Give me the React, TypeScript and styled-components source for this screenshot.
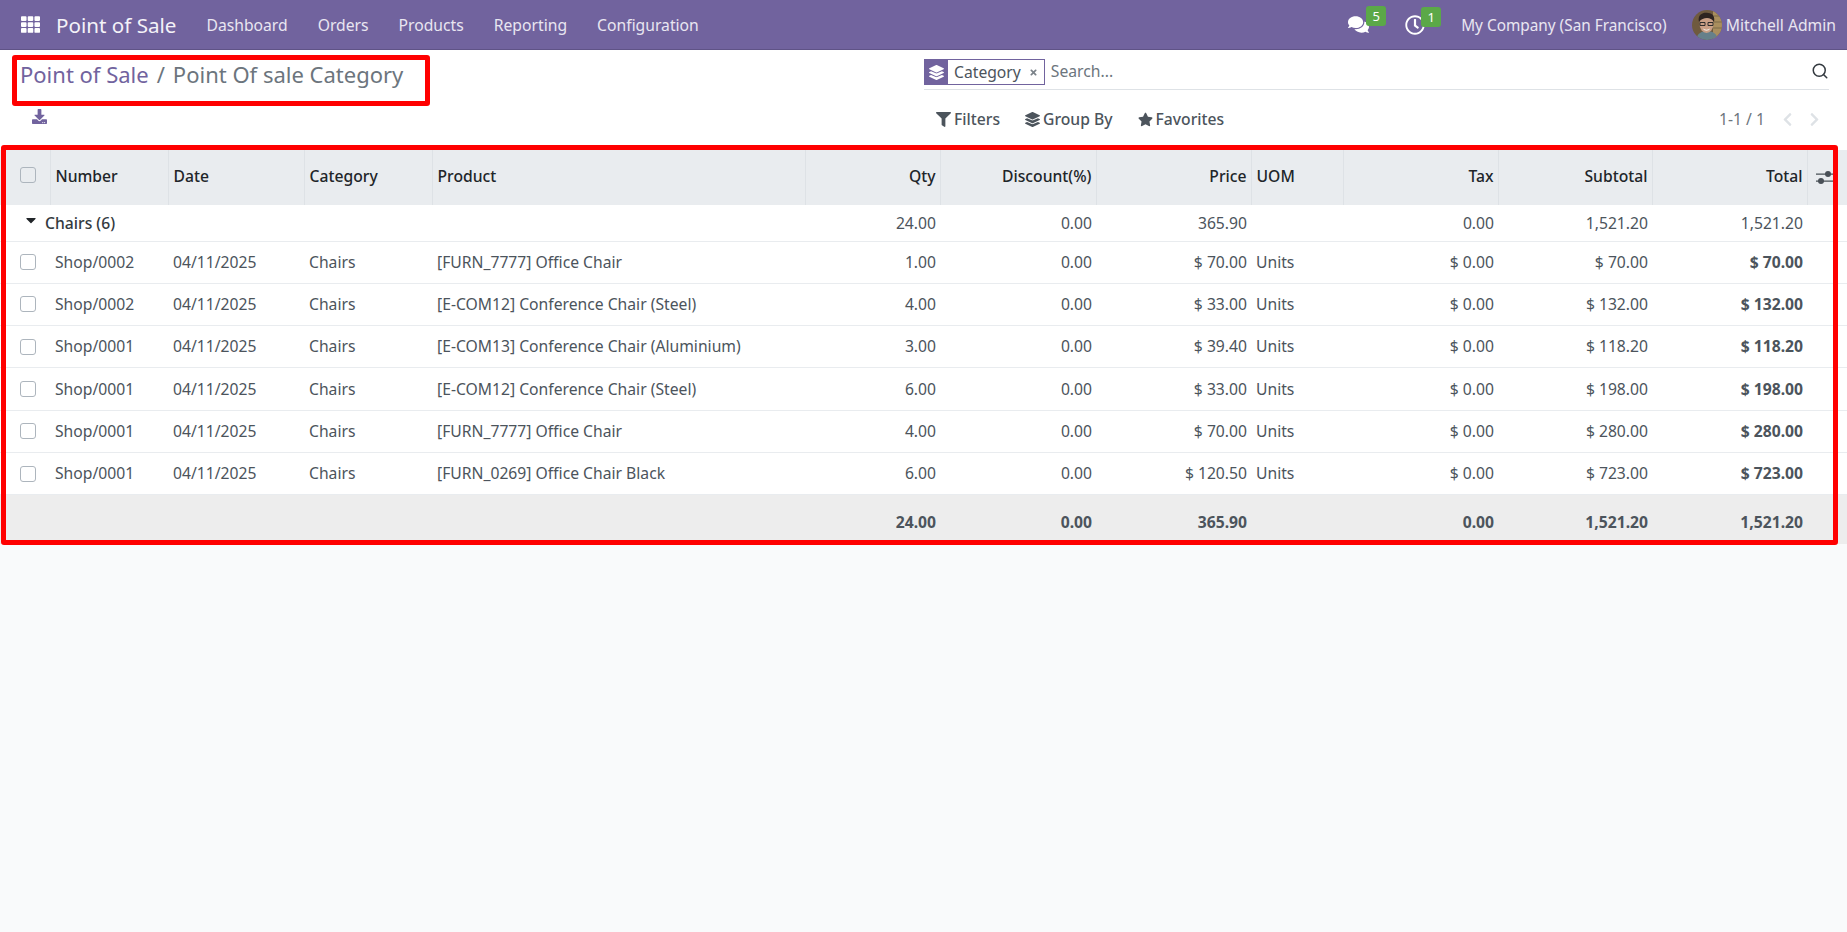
import { FC, ReactNode } from 'react'

import { Search } from 'lucide-react'
import { FaCaretDown, FaChevronLeft, FaChevronRight, FaComments, FaDownload, FaFilter, FaLayerGroup, FaRegClock, FaStar, FaTh, FaTimes } from 'react-icons/fa'
import styled, { createGlobalStyle } from 'styled-components'

const FONT = '"Noto Sans", "Open Sans", sans-serif'

const GlobalStyle = createGlobalStyle`
  html, body {
    margin: 0;
    height: 100%;
    background: #f9fafb;
    font-family: ${FONT};
    font-size: 15.7px;
    color: #4c545c;
  }
`

const Page = styled.div`
  display: flex;
  flex-direction: column;
  width: 1847px;
  height: 932px;
  overflow: hidden;
`

const NavBar = styled.header`
  display: flex;
  align-items: center;
  flex: 0 0 50px;
  box-sizing: border-box;
  padding: 0 11px 0 21px;
  background: #71639e;
  border-bottom: 1px solid #5f5386;
  color: #fff;
`

const Brand = styled.span`
  margin: 0 15px 0 16px;
  font-size: 20.6px;
  color: #f4f2f8;
`

const NavItem = styled.span`
  padding: 0 15px;
  color: #e9e6f1;
`

const NavRight = styled.div`
  display: flex;
  align-items: center;
  margin-left: auto;
`

const IconBadge = styled.span`
  position: relative;
  display: flex;
  align-items: center;
  margin-right: 36px;
  font-size: 20px;
`

const Badge = styled.span<{ $offset: number }>`
  position: absolute;
  top: -8px;
  right: ${({ $offset }) => $offset}px;
  display: flex;
  align-items: center;
  justify-content: center;
  width: 20px;
  height: 20px;
  border-radius: 3px;
  background: #5ba848;
  font-size: 13px;
`

const Company = styled.span`
  margin-right: 25px;
  font-size: 15.35px;
  color: #e9e6f1;
`

const UserName = styled.span`
  margin-left: 4px;
  color: #e9e6f1;
`

const ControlPanel = styled.section`
  display: grid;
  grid-template-columns: 924px 1fr;
  flex: 0 0 100px;
  background: #fff;
`

const LeftPanel = styled.div`
  display: flex;
  flex-direction: column;
  align-items: flex-start;
  padding-left: 20px;
`

const Annotated = styled.div`
  position: relative;
`

const RedFrame = styled.div<{ $inset: string }>`
  position: absolute;
  inset: ${({ $inset }) => $inset};
  border: 5px solid #ff0000;
  border-radius: 3px;
  pointer-events: none;
`

const Breadcrumb = styled.div`
  display: flex;
  gap: 8px;
  height: 50px;
  padding-bottom: 2px;
  box-sizing: border-box;
  align-items: center;
  font-size: 22px;
  color: #6c757d;
`

const BreadcrumbLink = styled.span`
  color: #71639e;
`

const DownloadButton = styled.span`
  display: flex;
  margin: 9px 0 0 12px;
  font-size: 15px;
  color: #71639e;
`

const RightPanel = styled.div`
  display: flex;
  flex-direction: column;
  padding-right: 18px;
`

const SearchBar = styled.div`
  display: flex;
  align-items: center;
  margin-top: 9px;
  height: 30px;
  border-bottom: 1px solid #dee2e6;
`

const Facet = styled.span`
  display: flex;
  align-items: stretch;
  box-sizing: border-box;
  height: 26px;
  margin-bottom: 4px;
  border: 1px solid #71639e;
`

const FacetIcon = styled.span`
  display: flex;
  align-items: center;
  justify-content: center;
  width: 23px;
  background: #71639e;
  color: #fff;
  font-size: 15px;
`

const FacetLabel = styled.span`
  display: flex;
  align-items: center;
  gap: 8px;
  padding: 0 6px 0 6px;
  color: #4c545c;
`

const FacetClose = styled.span`
  display: flex;
  font-size: 9px;
  color: #7b8289;
`

const SearchText = styled.span`
  flex: 1;
  margin: 0 0 6px 6px;
  color: #6c757d;
`

const SearchIcon = styled.span`
  display: flex;
  margin: 0 0 6px 0;
  color: #343a40;
`

const ActionRow = styled.div`
  display: flex;
  align-items: center;
  justify-content: space-between;
  margin-top: 18px;
  padding-left: 12px;
`

const Actions = styled.div`
  display: flex;
  gap: 25px;
`

const ActionButton = styled.span`
  display: flex;
  align-items: center;
  gap: 3px;
  font-weight: 500;
  color: #4c545c;

  svg {
    font-size: 15px;
    color: #4c545c;
  }
`

const Pager = styled.div`
  display: flex;
  align-items: center;
  gap: 15px;
  padding-right: 7px;
  color: #6c757d;
`

const PagerArrows = styled.span`
  display: flex;
  gap: 12px;
  font-size: 15px;
  color: #dee2e6;
`

const TableWrap = styled(Annotated)`
  width: 1847px;
  background: #fff;
`

const Table = styled.table`
  width: 1847px;
  table-layout: fixed;
  border-collapse: collapse;
`

const HeadRow = styled.tr`
  height: 55px;
  background: #e9ecef;
`

const Th = styled.th<{ $right?: boolean }>`
  padding: 0 4px 3px 5px;
  border-left: 1px solid #dee2e6;
  text-align: ${({ $right }) => ($right ? 'right' : 'left')};
  font-weight: 500;
  color: #212529;

  &:first-child {
    border-left: 0;
  }
`

const CheckCell = styled.td`
  padding: 0 0 0 20px;
`

const CheckHead = styled.th`
  padding: 0 0 6px 20px;
`

const Checkbox = styled.span`
  display: block;
  box-sizing: border-box;
  width: 16px;
  height: 16px;
  border: 1px solid #adb5bd;
  border-radius: 3px;
  background: #fff;
`

const HeadCheckbox = styled(Checkbox)`
  background: #e9ecef;
`

const OptionsIcon = styled.svg`
  display: block;
  width: 22px;
  height: 14px;
  margin: 3px 0 0 3px;
  color: #495057;
`

const GroupRow = styled.tr`
  height: 36px;
  border-bottom: 1px solid #e9ecef;

  td {
    padding-top: 1px;
    padding-bottom: 0;
  }
`

const GroupLabel = styled.span`
  display: flex;
  align-items: center;
  gap: 6px;
  padding-left: 18px;
  font-weight: 500;
  color: #343a40;

  svg {
    margin-top: -6px;
    font-size: 16px;
    color: #212529;
  }
`

const Row = styled.tr`
  height: 42.3px;
  border-bottom: 1px solid #e9ecef;
`

const Td = styled.td<{ $right?: boolean; $bold?: boolean }>`
  padding: 0 4px 1px 5px;
  text-align: ${({ $right }) => ($right ? 'right' : 'left')};
  font-weight: ${({ $bold }) => ($bold ? 700 : 400)};
  white-space: nowrap;
`

const FootRow = styled.tr`
  height: 49px;
  background: #ededed;
`

const FootCell = styled.td`
  padding: 5px 4px 0 5px;
  text-align: right;
  font-weight: 700;
`

const AvatarSvg = styled.svg`
  width: 30px;
  height: 30px;
  border-radius: 50%;
`

const Avatar: FC = () => (
  <AvatarSvg viewBox="0 0 30 30">
    <rect width="30" height="30" fill="#6f5a3e" />
    <path d="M21 0h9v30h-9z" fill="#a98e5e" />
    <path d="M21 6h9M21 12h9M21 18h9" stroke="#7d6a48" strokeWidth="1" />
    <path d="M4 30c1-7 6-9 11-9s10 2 11 9z" fill="#66808a" />
    <ellipse cx="14.500" cy="14" rx="7" ry="9" fill="#c99f86" />
    <path d="M7 12C5 4 12 2 16 3c5 0 7 4 6 9-2-3-4-4-7-4-3 0-6 1-8 4z" fill="#2e2420" />
    <path d="M8 12.500h5v3H8zM16 12.500h5v3h-5z" fill="none" stroke="#2f2d2c" strokeWidth="1" />
    <path d="M11 18.500c2 1.500 5 1.500 7 0-1 3-6 3-7 0z" fill="#f4eee6" />
  </AvatarSvg>
)

const MENU = ['Dashboard', 'Orders', 'Products', 'Reporting', 'Configuration']

type Column = { label: string; width: number; right?: boolean }

const COLUMNS: Column[] = [
  { label: 'Number', width: 118 },
  { label: 'Date', width: 136 },
  { label: 'Category', width: 128 },
  { label: 'Product', width: 373 },
  { label: 'Qty', width: 135, right: true },
  { label: 'Discount(%)', width: 156, right: true },
  { label: 'Price', width: 155, right: true },
  { label: 'UOM', width: 92 },
  { label: 'Tax', width: 155, right: true },
  { label: 'Subtotal', width: 154, right: true },
  { label: 'Total', width: 155, right: true },
]

const ROWS = [
  ['Shop/0002', '[FURN_7777] Office Chair', '1.00', '$ 70.00', '$ 70.00'],
  ['Shop/0002', '[E-COM12] Conference Chair (Steel)', '4.00', '$ 33.00', '$ 132.00'],
  ['Shop/0001', '[E-COM13] Conference Chair (Aluminium)', '3.00', '$ 39.40', '$ 118.20'],
  ['Shop/0001', '[E-COM12] Conference Chair (Steel)', '6.00', '$ 33.00', '$ 198.00'],
  ['Shop/0001', '[FURN_7777] Office Chair', '4.00', '$ 70.00', '$ 280.00'],
  ['Shop/0001', '[FURN_0269] Office Chair Black', '6.00', '$ 120.50', '$ 723.00'],
]

const Action: FC<{ icon: ReactNode; label: string }> = ({ icon, label }) => (
  <ActionButton>
    {icon}
    {label}
  </ActionButton>
)

const App: FC = () => {
  return (
    <Page>
      <GlobalStyle />
      <NavBar>
        <FaTh size={19} />
        <Brand>Point of Sale</Brand>
        {MENU.map((item) => (
          <NavItem key={item}>{item}</NavItem>
        ))}
        <NavRight>
          <IconBadge>
            <FaComments size={21} />
            <Badge $offset={-17}>5</Badge>
          </IconBadge>
          <IconBadge>
            <FaRegClock />
            <Badge $offset={-16}>1</Badge>
          </IconBadge>
          <Company>My Company (San Francisco)</Company>
          <Avatar />
          <UserName>Mitchell Admin</UserName>
        </NavRight>
      </NavBar>

      <ControlPanel>
        <LeftPanel>
          <Annotated>
            <Breadcrumb>
              <BreadcrumbLink>Point of Sale</BreadcrumbLink>
              <span>/</span>
              <span>Point Of sale Category</span>
            </Breadcrumb>
            <RedFrame $inset="5px -27px -6px -8px" />
          </Annotated>
          <DownloadButton>
            <FaDownload />
          </DownloadButton>
        </LeftPanel>
        <RightPanel>
          <SearchBar>
            <Facet>
              <FacetIcon>
                <FaLayerGroup />
              </FacetIcon>
              <FacetLabel>
                Category
                <FacetClose>
                  <FaTimes />
                </FacetClose>
              </FacetLabel>
            </Facet>
            <SearchText>Search...</SearchText>
            <SearchIcon>
              <Search size={18} strokeWidth={2} />
            </SearchIcon>
          </SearchBar>
          <ActionRow>
            <Actions>
              <Action icon={<FaFilter />} label="Filters" />
              <Action icon={<FaLayerGroup />} label="Group By" />
              <Action icon={<FaStar />} label="Favorites" />
            </Actions>
            <Pager>
              1-1 / 1
              <PagerArrows>
                <FaChevronLeft />
                <FaChevronRight />
              </PagerArrows>
            </Pager>
          </ActionRow>
        </RightPanel>
      </ControlPanel>

      <TableWrap>
        <Table>
          <colgroup>
            <col width={50} />
            {COLUMNS.map((column) => (
              <col key={column.label} width={column.width} />
            ))}
            <col width={40} />
          </colgroup>
          <thead>
            <HeadRow>
              <CheckHead>
                <HeadCheckbox />
              </CheckHead>
              {COLUMNS.map((column) => (
                <Th key={column.label} $right={column.right}>
                  {column.label}
                </Th>
              ))}
              <Th>
                <OptionsIcon viewBox="0 0 22 14" fill="currentColor">
                  <path d="M0 2.500h22v1.200H0zM0 9.500h22v1.200H0z" />
                  <circle cx="12" cy="3" r="3" />
                  <circle cx="5" cy="10" r="3" />
                </OptionsIcon>
              </Th>
            </HeadRow>
          </thead>
          <tbody>
            <GroupRow>
              <Td colSpan={5}>
                <GroupLabel>
                  <FaCaretDown />
                  Chairs (6)
                </GroupLabel>
              </Td>
              <Td $right>24.00</Td>
              <Td $right>0.00</Td>
              <Td $right>365.90</Td>
              <Td />
              <Td $right>0.00</Td>
              <Td $right>1,521.20</Td>
              <Td $right>1,521.20</Td>
              <Td />
            </GroupRow>
            {ROWS.map(([number, product, qty, price, total], index) => (
              <Row key={index}>
                <CheckCell>
                  <Checkbox />
                </CheckCell>
                <Td>{number}</Td>
                <Td>04/11/2025</Td>
                <Td>Chairs</Td>
                <Td>{product}</Td>
                <Td $right>{qty}</Td>
                <Td $right>0.00</Td>
                <Td $right>{price}</Td>
                <Td>Units</Td>
                <Td $right>$ 0.00</Td>
                <Td $right>{total}</Td>
                <Td $right $bold>
                  {total}
                </Td>
                <Td />
              </Row>
            ))}
          </tbody>
          <tfoot>
            <FootRow>
              <FootCell colSpan={5} />
              <FootCell>24.00</FootCell>
              <FootCell>0.00</FootCell>
              <FootCell>365.90</FootCell>
              <FootCell />
              <FootCell>0.00</FootCell>
              <FootCell>1,521.20</FootCell>
              <FootCell>1,521.20</FootCell>
              <FootCell />
            </FootRow>
          </tfoot>
        </Table>
        <RedFrame $inset="-5px 9px -1px 1px" />
      </TableWrap>
    </Page>
  )
}

export default App
